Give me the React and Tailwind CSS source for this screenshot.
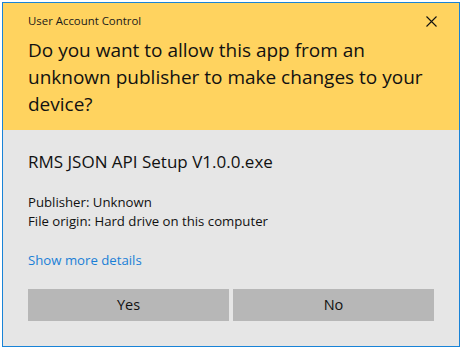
import React from 'react';

const font = { fontFamily: '"Segoe UI", "Open Sans", sans-serif' };

export default function App() {
    return (
        <div className="w-[464px] h-[350px] bg-white pt-[2px] pl-[2px]" style={font}>
            <div className="w-[458px] h-[345px] border border-[#1883d7] flex flex-col bg-[#e6e6e6]">
                <div className="bg-[#ffd35f] h-[127px] px-[25px] pt-[10px]">
                    <div className="flex items-center justify-between h-[16px]">
                        <span className="text-[11.4px] text-[#1a1a1a]">User Account Control</span>
                        <svg width="11" height="11" viewBox="0 0 11 11" className="mr-[-3px]">
                            <path d="M0.5 0.5 L10.5 10.5 M10.5 0.5 L0.5 10.5" stroke="#111" strokeWidth="1.1" />
                        </svg>
                    </div>
                    <p className="mt-[8px] text-[19px] leading-[27px] text-[#111] w-[405px]">
                        Do you want to allow this app from an unknown publisher to make changes to your device?
                    </p>
                </div>
                <div className="px-[25px] pt-[20px]">
                    <div className="text-[17px] leading-[24px] text-[#111]">RMS JSON API Setup V1.0.0.exe</div>
                    <div className="mt-[19px] text-[13.2px] leading-[19px] text-[#111]">
                        <div>Publisher: Unknown</div>
                        <div>File origin: Hard drive on this computer</div>
                    </div>
                    <div className="mt-[20px] text-[13.2px] leading-[18px] text-[#1a7fd6]">Show more details</div>
                    <div className="mt-[20px] flex gap-[4px]">
                        <button className="w-[201px] h-[32px] bg-[#b7b7b7] text-[14.5px] text-[#111]">Yes</button>
                        <button className="w-[201px] h-[32px] bg-[#b7b7b7] text-[14.5px] text-[#111]">No</button>
                    </div>
                </div>
            </div>
        </div>
    );
}
